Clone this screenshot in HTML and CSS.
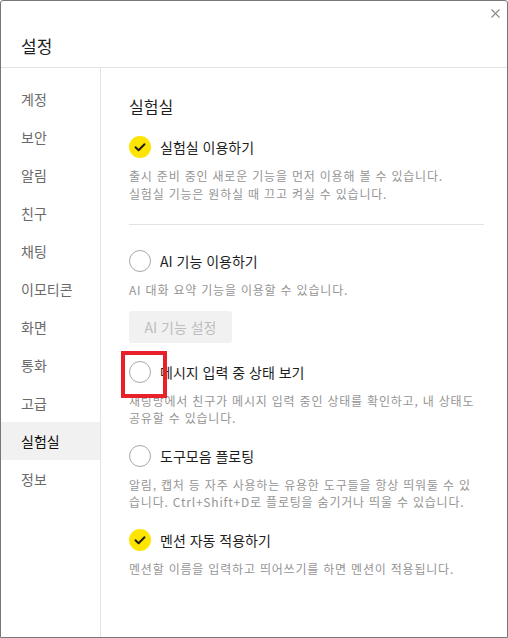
FILE: index.html
```html
<!DOCTYPE html>
<html lang="ko">
<head>
    <meta charset="UTF-8">
    <title>설정</title>
    <link rel="stylesheet" href="styles.css">
</head>
<body>
    <div class="window">
        <div class="header">
            <h1>설정</h1>
            <button class="close" aria-label="닫기">
                <svg width="9" height="9" viewBox="0 0 9 9"><path d="M0.5 0.5L8.5 8.5M8.5 0.5L0.5 8.5" stroke="#8a8a8a" stroke-width="1.1" fill="none"/></svg>
            </button>
        </div>
        <div class="main">
            <ul class="sidebar">
                <li>계정</li>
                <li>보안</li>
                <li>알림</li>
                <li>친구</li>
                <li>채팅</li>
                <li>이모티콘</li>
                <li>화면</li>
                <li>통화</li>
                <li>고급</li>
                <li class="active">실험실</li>
                <li>정보</li>
            </ul>
            <div class="content">
                <h2>실험실</h2>

                <div class="option">
                    <div class="row">
                        <span class="check on"><svg width="22" height="22" viewBox="0 0 22 22"><path d="M6.5 11.2L9.6 14.2L15.5 8.3" stroke="#1e1e1e" stroke-width="2" fill="none" stroke-linecap="round" stroke-linejoin="round"/></svg></span>
                        <span class="label">실험실 이용하기</span>
                    </div>
                    <p class="desc">출시 준비 중인 새로운 기능을 먼저 이용해 볼 수 있습니다.<br>실험실 기능은 원하실 때 끄고 켜실 수 있습니다.</p>
                </div>

                <hr class="divider">

                <div class="option">
                    <div class="row">
                        <span class="check"></span>
                        <span class="label">AI 기능 이용하기</span>
                    </div>
                    <p class="desc">AI 대화 요약 기능을 이용할 수 있습니다.</p>
                    <button class="sub-btn" disabled>AI 기능 설정</button>
                </div>

                <div class="option">
                    <div class="row">
                        <span class="check marked"></span>
                        <span class="label">메시지 입력 중 상태 보기</span>
                    </div>
                    <p class="desc">채팅방에서 친구가 메시지 입력 중인 상태를 확인하고, 내 상태도<br>공유할 수 있습니다.</p>
                </div>

                <div class="option">
                    <div class="row">
                        <span class="check"></span>
                        <span class="label">도구모음 플로팅</span>
                    </div>
                    <p class="desc">알림, 캡처 등 자주 사용하는 유용한 도구들을 항상 띄워둘 수 있<br>습니다. Ctrl+Shift+D로 플로팅을 숨기거나 띄울 수 있습니다.</p>
                </div>

                <div class="option">
                    <div class="row">
                        <span class="check on"><svg width="22" height="22" viewBox="0 0 22 22"><path d="M6.5 11.2L9.6 14.2L15.5 8.3" stroke="#1e1e1e" stroke-width="2" fill="none" stroke-linecap="round" stroke-linejoin="round"/></svg></span>
                        <span class="label">멘션 자동 적용하기</span>
                    </div>
                    <p class="desc">멘션할 이름을 입력하고 띄어쓰기를 하면 멘션이 적용됩니다.</p>
                </div>
            </div>
        </div>
    </div>
</body>
</html>
```

FILE: styles.css
```css
* {
    box-sizing: border-box;
}
body {
    margin: 0;
    font-family: "Noto Sans CJK KR", "Noto Sans", sans-serif;
    background: #fff;
    color: #1e1e1e;
}
.window {
    width: 508px;
    height: 638px;
    border: 1px solid #777;
    border-radius: 3px 3px 0 0;
    display: flex;
    flex-direction: column;
    overflow: hidden;
}
.header {
    position: relative;
    height: 67px;
    border-bottom: 1px solid #e3e3e3;
    padding: 34px 20px 0;
}
h1 {
    margin: 0;
    font-size: 17px;
    font-weight: normal;
    line-height: 22px;
}
.close {
    position: absolute;
    top: 8px;
    right: 7px;
    width: 9px;
    height: 9px;
    padding: 0;
    border: none;
    background: none;
    cursor: pointer;
}
.close svg {
    display: block;
}
.main {
    flex: 1;
    display: flex;
}
.sidebar {
    width: 100px;
    margin: 0;
    padding: 12px 0 0;
    list-style: none;
    border-right: 1px solid #e3e3e3;
}
.sidebar li {
    height: 38px;
    line-height: 38px;
    padding-left: 20px;
    font-size: 14px;
    color: #6a6a6a;
}
.sidebar li.active {
    background: #f1f1f1;
    color: #111;
}
.content {
    flex: 1;
    padding: 28px 23px 0 28px;
}
h2 {
    margin: 0 0 20px;
    font-size: 16px;
    font-weight: normal;
    line-height: 20px;
}
.option {
    margin-bottom: 18px;
}
.row {
    display: flex;
    align-items: center;
    height: 22px;
}
.check {
    position: relative;
    width: 22px;
    height: 22px;
    border-radius: 50%;
    border: 1.5px solid #a8a8a8;
    margin-right: 9px;
    flex: none;
}
.check.on {
    border: none;
    background: #fee500;
}
.check svg {
    display: block;
}
.check.marked::after {
    content: "";
    position: absolute;
    left: -9.5px;
    top: -10.5px;
    width: 38px;
    height: 39px;
    border: 4px solid #e8202a;
}
.label {
    font-size: 14px;
    line-height: 22px;
}
.desc {
    margin: 9px 0 0;
    font-size: 12px;
    letter-spacing: 0.8px;
    line-height: 17.5px;
    color: #959595;
    white-space: nowrap;
}
.divider {
    margin: 22px 0 25px;
    border: none;
    border-top: 1px solid #e3e3e3;
}
.sub-btn {
    display: block;
    margin: 12px 0 1px;
    width: 103px;
    height: 32px;
    border: none;
    border-radius: 3px;
    background: #f1f1f1;
    color: #bdbdbd;
    font-family: inherit;
    font-size: 14px;
}
```
